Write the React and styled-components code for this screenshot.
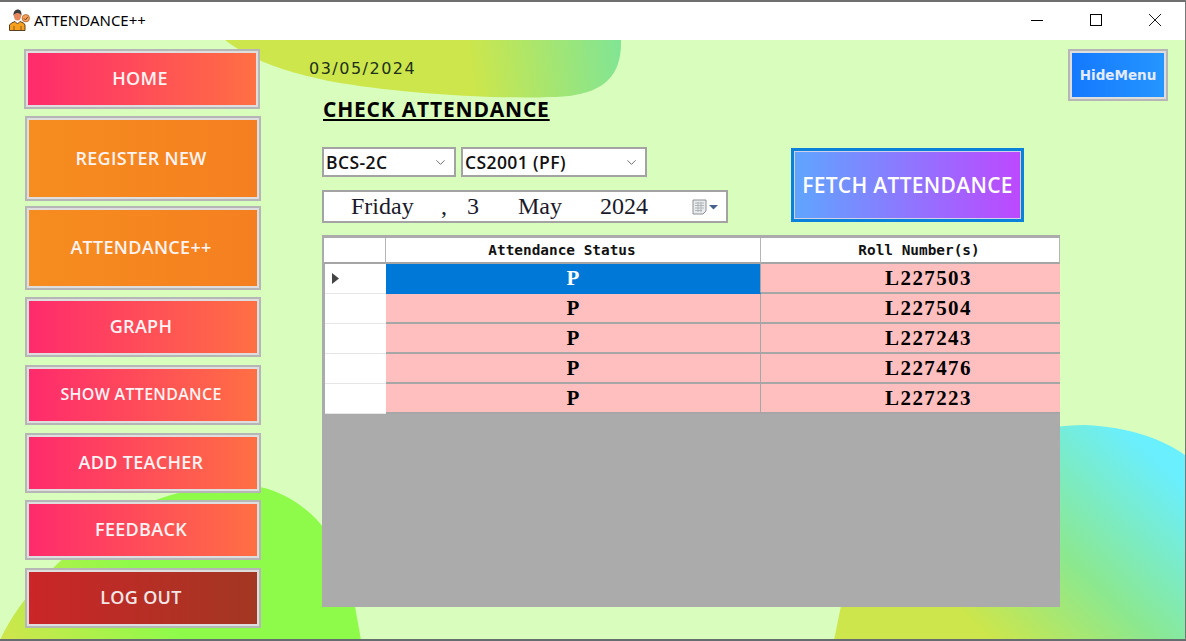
import React from 'react';
import styled, { createGlobalStyle } from 'styled-components';
import { ChevronDown } from 'lucide-react';

const GlobalStyle = createGlobalStyle`
  html, body {
    margin: 0;
    padding: 0;
    width: 1186px;
    height: 641px;
    overflow: hidden;
    background: #fff;
  }
  * {
    box-sizing: border-box;
  }
`;

const Window = styled.div`
  width: 1186px;
  height: 641px;
  display: flex;
  flex-direction: column;
  border-top: 2px solid #6f6f6f;
  border-right: 1px solid #777;
  border-bottom: 2px solid #666d70;
  font-family: "Open Sans", "Liberation Sans", sans-serif;
`;

const TitleBar = styled.div`
  height: 38px;
  flex: none;
  display: flex;
  align-items: center;
  background: #fff;
  padding: 0 0 2px 9px;
`;

const AppTitle = styled.span`
  margin-left: 4px;
  font-family: "Noto Sans", sans-serif;
  font-size: 15px;
  color: #000;
`;

const WindowControls = styled.div`
  margin-left: auto;
  display: flex;
  height: 100%;
  margin-right: 1px;
`;

const ControlBox = styled.div`
  width: 59px;
  height: 100%;
  display: flex;
  align-items: center;
  justify-content: center;
`;

const Body = styled.div`
  position: relative;
  flex: 1;
  display: flex;
  min-height: 0;
  overflow: hidden;
  background: #d9fdbd;
`;

const Blobs = styled.svg`
  position: absolute;
  left: 0;
  top: 0;
`;

const Sidebar = styled.nav`
  position: relative;
  width: 309px;
  flex: none;
  display: flex;
  flex-direction: column;
  padding: 9px 0 0 24px;
`;

const gradients = {
  pink: 'linear-gradient(90deg, #ff2a6d, #ff7043)',
  orange: 'linear-gradient(90deg, #f68d1f, #f57f20)',
  red: 'linear-gradient(90deg, #cb2528, #a23722)',
  blue: 'linear-gradient(90deg, #1478ff, #2596ff)',
};

const MenuButton = styled.button`
  display: block;
  width: 236px;
  height: ${(p) => p.$h}px;
  margin: 0 0 ${(p) => p.$gap}px ${(p) => p.$shift || 0}px;
  padding: 0 4px 2px 0;
  border: 2px solid #b6b6b6;
  outline: 2px solid #dedede;
  outline-offset: -4px;
  background: ${(p) => gradients[p.$tone]};
  color: ${(p) => (p.$tone === 'red' ? '#f3e6e6' : '#fff3f3')};
  font-family: "Open Sans", sans-serif;
  font-weight: 600;
  font-size: ${(p) => p.$size || 18}px;
  letter-spacing: 0.3px;
  text-align: center;
`;

const Main = styled.main`
  position: relative;
  width: 751px;
  flex: none;
  display: flex;
  flex-direction: column;
`;

const DateLabel = styled.div`
  margin-top: 19px;
  height: 20px;
  font-family: "DejaVu Sans", sans-serif;
  font-size: 16px;
  line-height: 20px;
  letter-spacing: 1.5px;
  color: #20301a;
`;

const Heading = styled.h1`
  margin: 18px 0 0 14px;
  height: 25px;
  font-family: "Open Sans", sans-serif;
  font-size: 21px;
  line-height: 25px;
  letter-spacing: 0.8px;
  font-weight: 700;
  color: #000;
  text-decoration: underline;
  text-decoration-thickness: 2px;
  text-underline-offset: 2px;
`;

const Controls = styled.div`
  margin: 25px 0 0 13px;
  display: flex;
  align-items: flex-start;
`;

const Fields = styled.div`
  width: 469px;
  flex: none;
  display: flex;
  flex-direction: column;
  gap: 13px;
`;

const SelectRow = styled.div`
  display: flex;
  gap: 5px;
`;

const Select = styled.div`
  width: ${(p) => p.$w}px;
  height: 30px;
  display: flex;
  align-items: center;
  justify-content: space-between;
  padding: 0 6px 0 2px;
  background: #fff;
  border: 2px solid #a3a3a3;
  font-family: "Open Sans", sans-serif;
  font-size: 17.5px;
  font-weight: 600;
  letter-spacing: 0.4px;
  color: #111;
`;

const DatePicker = styled.div`
  width: 406px;
  height: 33px;
  display: flex;
  align-items: center;
  background: #fff;
  border: 2px solid #a3a3a3;
  font-family: "Liberation Serif", serif;
  font-size: 24px;
  color: #1a1a2a;
`;

const DatePart = styled.span`
  width: ${(p) => p.$w}px;
  flex: none;
  white-space: nowrap;
`;

const FetchButton = styled.button`
  margin: 1px 0 0 0;
  width: 233px;
  height: 74px;
  padding: 0;
  border: 3px solid #0a82dc;
  outline: 1px solid #d0d0e8;
  outline-offset: -4px;
  background: linear-gradient(90deg, #5fa5ff, #bd48ff);
  color: #fff;
  font-family: "Open Sans", sans-serif;
  font-size: 21px;
  font-weight: 600;
  letter-spacing: 0.3px;
`;

const GridView = styled.div`
  margin: 12px 0 0 13px;
  width: 738px;
  height: 372px;
  background: #ababab;
  border-top: 3px solid #ababab;
  border-left: 2px solid #ababab;
`;

const Table = styled.div`
  display: grid;
  grid-template-columns: 62px 375px 299px;
`;

const HeaderCell = styled.div`
  height: 26px;
  display: flex;
  align-items: center;
  justify-content: center;
  padding: ${(p) => p.$pad || 0};
  background: #fff;
  border-right: 1px solid #b5b5b5;
  border-bottom: 2px solid #a5a5a5;
  font-family: "DejaVu Sans Mono", monospace;
  font-size: 14.4px;
  font-weight: 700;
  color: #111;

  &:last-child {
    border-right: none;
  }
`;

const RowHeader = styled.div`
  height: 30px;
  display: flex;
  align-items: center;
  padding-left: 7px;
  background: #fff;
  margin-left: 1px;
  border-bottom: 1px solid #e6e6e6;
`;

const Cell = styled.div`
  height: 30px;
  display: flex;
  align-items: center;
  justify-content: center;
  background: ${(p) => (p.$selected ? '#0078d7' : '#ffbfbe')};
  color: ${(p) => (p.$selected ? '#fff' : '#000')};
  border-bottom: 2px solid ${(p) => (p.$selected ? '#0078d7' : '#a6a6a6')};
  border-right: ${(p) => (p.$divider ? '1px solid #a6a6a6' : 'none')};
  font-family: "Liberation Serif", serif;
  font-size: 21px;
  font-weight: 700;
`;

const RollCell = styled(Cell)`
  padding-left: 36px;
  background: #ffbfbe;
  color: #000;
  border-bottom-color: #a6a6a6;
  letter-spacing: 1.4px;
`;

const HideColumn = styled.div`
  position: relative;
  flex: 1;
  padding: 9px 0 0 8px;
`;

const HideButton = styled(MenuButton)`
  width: 100px;
  height: 52px;
  margin: 0;
  padding: 0;
  font-family: "DejaVu Sans", sans-serif;
  font-size: 13.5px;
  font-weight: 700;
  letter-spacing: 0;
  color: #e6ecff;
`;

function AppIcon() {
  return (
    <svg width="21" height="22" viewBox="0 0 21 22">
      <path d="M0.5 21.5v-5.5l2-2 3.5-1.5 2.5 2.5 2.5-2.5 3.5 1.5 1.5 2v5.5z" fill="#f7a01e" stroke="#5a4020" strokeWidth="1" />
      <path d="M5 21v-4M12 21v-4" stroke="#8a5a20" strokeWidth="1" />
      <ellipse cx="8.5" cy="7" rx="3.6" ry="4.6" fill="#e8875c" />
      <path d="M4.6 7C4 2.5 6.5 0.5 8.8 0.5S13 2.5 12.4 7C11.8 4.8 10.5 4 8.5 4S5.2 4.8 4.6 7z" fill="#3c3c3c" />
      <circle cx="16.8" cy="9.2" r="3.7" fill="#f5a05a" stroke="#a8682e" strokeWidth="0.8" />
      <path d="M15 9.4l1.4 1.5 2.4-3" fill="none" stroke="#7a4218" strokeWidth="1" />
    </svg>
  );
}

function CalendarIcon() {
  return (
    <svg width="27" height="16" viewBox="0 0 27 16">
      <path d="M1 1h13v11l-3 3H1z" fill="#e8eaec" stroke="#8c9096" />
      <path d="M3 4h9M3 6.5h9M3 9h9M3 11.5h7M6 3v10M9 3v10" stroke="#b0b5ba" strokeWidth="1" />
      <path d="M17 6h9l-4.5 4.5z" fill="#46618c" />
    </svg>
  );
}

const menu = [
  { label: 'HOME', tone: 'pink', h: 60, gap: 7 },
  { label: 'REGISTER NEW', tone: 'orange', h: 85, gap: 5, shift: 1 },
  { label: 'ATTENDANCE++', tone: 'orange', h: 84, gap: 7, shift: 1 },
  { label: 'GRAPH', tone: 'pink', h: 60, gap: 8, shift: 1 },
  { label: 'SHOW ATTENDANCE', tone: 'pink', h: 60, gap: 8, shift: 1, size: 16 },
  { label: 'ADD TEACHER', tone: 'pink', h: 60, gap: 7, shift: 1 },
  { label: 'FEEDBACK', tone: 'pink', h: 60, gap: 8, shift: 1 },
  { label: 'LOG OUT', tone: 'red', h: 60, gap: 0, shift: 1 },
];

const rolls = ['L227503', 'L227504', 'L227243', 'L227476', 'L227223'];

export default function App() {
  return (
    <>
      <GlobalStyle />
      <Window>
        <TitleBar>
          <AppIcon />
          <AppTitle>ATTENDANCE++</AppTitle>
          <WindowControls>
            <ControlBox>
              <svg width="14" height="14" viewBox="0 0 14 14"><path d="M1 7.5h12" stroke="#000" /></svg>
            </ControlBox>
            <ControlBox>
              <svg width="14" height="14" viewBox="0 0 14 14"><rect x="1.5" y="1.5" width="11" height="11" fill="none" stroke="#000" /></svg>
            </ControlBox>
            <ControlBox>
              <svg width="14" height="14" viewBox="0 0 14 14"><path d="M1 1l12 12M13 1L1 13" stroke="#000" strokeWidth="0.9" /></svg>
            </ControlBox>
          </WindowControls>
        </TitleBar>
        <Body>
          <Blobs width="1186" height="601" viewBox="0 40 1186 601">
            <defs>
              <linearGradient id="topBlob" gradientUnits="userSpaceOnUse" x1="470" y1="70" x2="625" y2="50">
                <stop offset="0" stopColor="#cde64b" />
                <stop offset="1" stopColor="#7fe596" />
              </linearGradient>
              <linearGradient id="leftBlob" gradientUnits="userSpaceOnUse" x1="10" y1="640" x2="130" y2="560">
                <stop offset="0" stopColor="#cde64b" />
                <stop offset="1" stopColor="#8efb4a" />
              </linearGradient>
              <linearGradient id="rightBlob" gradientUnits="userSpaceOnUse" x1="990" y1="640" x2="1160" y2="460">
                <stop offset="0" stopColor="#cde64b" />
                <stop offset="0.45" stopColor="#8ce88e" />
                <stop offset="1" stopColor="#6aefff" />
              </linearGradient>
            </defs>
            <path d="M225 40C250 60 290 74 340 83C420 96 520 100 570 96C605 91 622 75 621 40Z" fill="url(#topBlob)" />
            <path d="M0 640C18 600 60 555 110 522C160 492 210 482 260 487C305 497 340 535 352 590L361 640Z" fill="url(#leftBlob)" />
            <path d="M834 640L841 606C860 500 980 425 1085 425C1130 427 1165 440 1186 456V640Z" fill="url(#rightBlob)" />
          </Blobs>
          <Sidebar>
            {menu.map((m) => (
              <MenuButton key={m.label} $tone={m.tone} $h={m.h} $gap={m.gap} $shift={m.shift} $size={m.size}>
                {m.label}
              </MenuButton>
            ))}
          </Sidebar>
          <Main>
            <DateLabel>03/05/2024</DateLabel>
            <Heading>CHECK ATTENDANCE</Heading>
            <Controls>
              <Fields>
                <SelectRow>
                  <Select $w={134}>
                    BCS-2C
                    <ChevronDown size={15} color="#666" strokeWidth={1.5} />
                  </Select>
                  <Select $w={186}>
                    CS2001 (PF)
                    <ChevronDown size={15} color="#666" strokeWidth={1.5} />
                  </Select>
                </SelectRow>
                <DatePicker>
                  <DatePart $w={27} />
                  <DatePart $w={90}>Friday</DatePart>
                  <DatePart $w={26}>,</DatePart>
                  <DatePart $w={51}>3</DatePart>
                  <DatePart $w={82}>May</DatePart>
                  <DatePart $w={92}>2024</DatePart>
                  <CalendarIcon />
                </DatePicker>
              </Fields>
              <FetchButton>FETCH ATTENDANCE</FetchButton>
            </Controls>
            <GridView>
              <Table>
                <HeaderCell />
                <HeaderCell $pad="0 22px 0 0">Attendance Status</HeaderCell>
                <HeaderCell $pad="0 0 0 18px">Roll Number(s)</HeaderCell>
                {rolls.map((roll, i) => (
                  <React.Fragment key={roll}>
                    <RowHeader>
                      {i === 0 && (
                        <svg width="7" height="11" viewBox="0 0 7 11"><path d="M0 0l7 5.5L0 11z" fill="#444" /></svg>
                      )}
                    </RowHeader>
                    <Cell $selected={i === 0} $divider>P</Cell>
                    <RollCell>{roll}</RollCell>
                  </React.Fragment>
                ))}
              </Table>
            </GridView>
          </Main>
          <HideColumn>
            <HideButton $tone="blue">HideMenu</HideButton>
          </HideColumn>
        </Body>
      </Window>
    </>
  );
}
